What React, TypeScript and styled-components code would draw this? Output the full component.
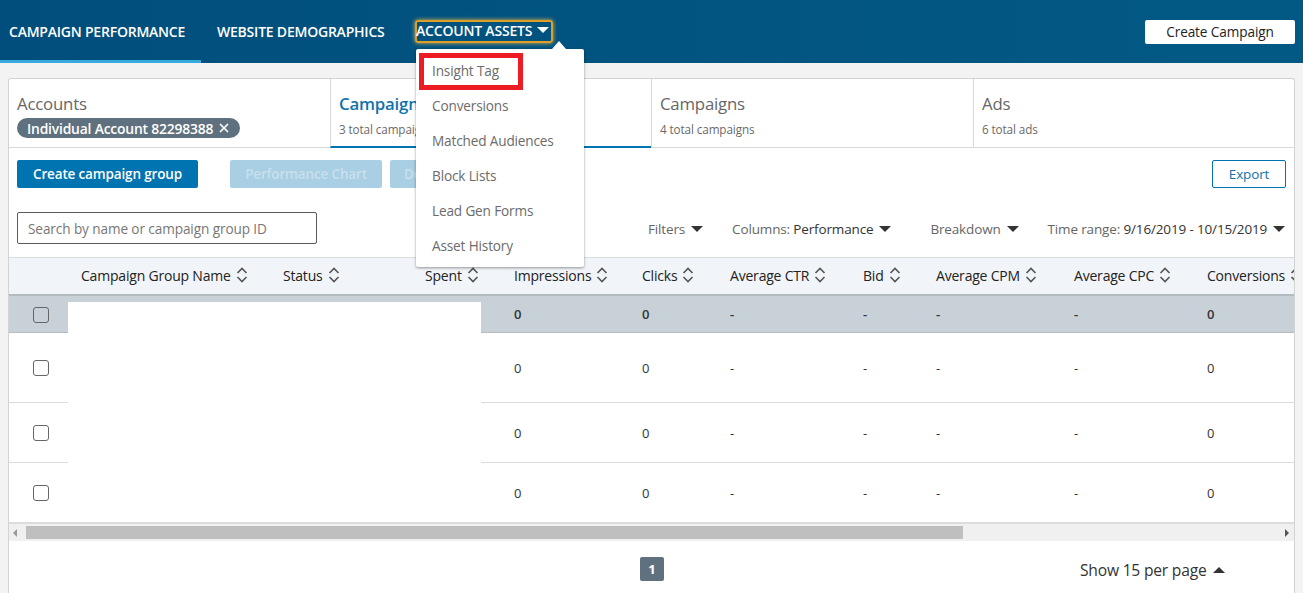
import React from "react"
import styled, { createGlobalStyle } from "styled-components"
import { X } from "lucide-react"

const GlobalStyle = createGlobalStyle`
  html, body {
    margin: 0;
    height: 100%;
    overflow: hidden;
    background: #f3f3f3;
    font-family: "Open Sans", "Noto Sans", sans-serif;
    color: #333;
  }
  * { box-sizing: border-box; }
`

const Page = styled.div`
  width: 1303px;
  height: 593px;
  overflow: hidden;
  display: flex;
  flex-direction: column;
`

const Header = styled.header`
  height: 63px;
  flex: none;
  background: linear-gradient(90deg, #014e7c, #025a84);
  display: flex;
  align-items: stretch;
  padding-right: 8px;
`

const NavItem = styled.div<{ $active?: boolean; $width: number; $inset: number }>`
  width: ${p => p.$width}px;
  flex: none;
  padding: 23px 0 0 ${p => p.$inset}px;
  font-size: 14px;
  line-height: 18px;
  font-weight: 600;
  letter-spacing: -0.22px;
  color: #fff;
  white-space: nowrap;
  border-bottom: 3px solid ${p => (p.$active ? "#38a9dd" : "transparent")};
`

const AssetsWrap = styled.div`
  position: relative;
  margin-left: -1px;
  margin-top: 20px;
  height: 23px;
`

const AssetsToggle = styled.div`
  width: 138px;
  height: 23px;
  display: flex;
  align-items: center;
  gap: 5px;
  padding: 0 0 3px 0;
  text-indent: -1px;
  border: 2px solid #dd9f27;
  border-radius: 3px;
  box-shadow: 0 0 4px #e9b44c;
  font-size: 14px;
  font-weight: 600;
  letter-spacing: -0.2px;
  color: #fff;
  white-space: nowrap;
`

const Caret = styled.span<{ $color?: string; $up?: boolean }>`
  display: inline-block;
  flex: none;
  width: 0;
  height: 0;
  border-left: 6px solid transparent;
  border-right: 6px solid transparent;
  ${p => (p.$up ? "border-bottom" : "border-top")}: 6px solid ${p => p.$color ?? "#333"};
`

const Menu = styled.div`
  position: absolute;
  top: 29px;
  left: 1px;
  width: 168px;
  height: 218px;
  padding-top: 4px;
  background: #fff;
  border-radius: 2px;
  box-shadow: 0 1px 3px rgba(0, 0, 0, 0.4);
  z-index: 5;
  &::before {
    content: "";
    position: absolute;
    top: -8px;
    right: 18px;
    border-left: 7px solid transparent;
    border-right: 7px solid transparent;
    border-bottom: 8px solid #fff;
  }
`

const MenuItem = styled.div`
  height: 35px;
  padding-left: 16px;
  display: flex;
  align-items: center;
  font-size: 13.6px;
  font-weight: 500;
  letter-spacing: -0.15px;
  color: #6b6b6b;
`

const Highlight = styled.div`
  position: absolute;
  top: 4px;
  left: 3px;
  width: 104px;
  height: 37px;
  border: 5px solid #ed1c24;
`

const CreateButton = styled.div`
  margin: 20px 0 0 auto;
  width: 150px;
  height: 24px;
  padding-bottom: 2px;
  background: #fff;
  border-radius: 2px;
  display: flex;
  align-items: center;
  justify-content: center;
  font-size: 13.6px;
  font-weight: 500;
  letter-spacing: -0.1px;
  color: #222;
`

const Card = styled.main`
  margin: 15px 8px 0;
  flex: 1;
  background: #fff;
  border: 1px solid #d3d3d3;
  border-bottom: none;
  border-radius: 3px 3px 0 0;
  display: flex;
  flex-direction: column;
  min-height: 0;
`

const Tabs = styled.div`
  height: 69px;
  flex: none;
  display: grid;
  grid-template-columns: 321px 321px 322px 1fr;
  border-bottom: 1px solid #d9d9d9;
`

const TabCell = styled.div<{ $active?: boolean; $first?: boolean }>`
  height: 69px;
  padding: 14px 0 0 8px;
  border-left: ${p => (p.$first ? "none" : "1px solid #d9d9d9")};
  border-bottom: ${p => (p.$active ? "2px solid #0073b1" : "none")};
  white-space: nowrap;
  overflow: hidden;
`

const TabTitle = styled.div<{ $active?: boolean }>`
  font-size: 16.8px;
  line-height: 22px;
  letter-spacing: -0.2px;
  font-weight: ${p => (p.$active ? 600 : 400)};
  color: ${p => (p.$active ? "#0f73ad" : "#666")};
`

const TabSub = styled.div`
  margin-top: 6px;
  font-size: 11.7px;
  line-height: 16px;
  letter-spacing: -0.1px;
  color: #6a6a6a;
`

const Pill = styled.div`
  margin-top: 3px;
  height: 20px;
  width: 223px;
  border-radius: 10px;
  background: #5f717f;
  color: #fff;
  display: flex;
  align-items: center;
  gap: 4px;
  padding-left: 10px;
  font-size: 13.9px;
  font-weight: 600;
  letter-spacing: -0.2px;
  white-space: nowrap;
`

const Toolbar = styled.div`
  flex: none;
  height: 64px;
  padding: 12px 8px 0 8px;
  display: flex;
  align-items: flex-start;
`

const Button = styled.div<{ $kind: "primary" | "disabled" | "outline"; $width: number; $gap?: number }>`
  width: ${p => p.$width}px;
  height: 28px;
  padding-bottom: 1px;
  margin-left: ${p => p.$gap ?? 0}px;
  border-radius: 2px;
  display: flex;
  align-items: center;
  justify-content: center;
  overflow: hidden;
  white-space: nowrap;
  font-size: 13.5px;
  font-weight: ${p => (p.$kind === "outline" ? 500 : 600)};
  letter-spacing: -0.15px;
  color: ${p => (p.$kind === "outline" ? "#0f73ad" : p.$kind === "disabled" ? "#c9dfec" : "#fff")};
  background: ${p => (p.$kind === "primary" ? "#0073b1" : p.$kind === "disabled" ? "#a8cfe4" : "#fff")};
  border: ${p => (p.$kind === "outline" ? "1px solid #0073b1" : "none")};
`

const ToolbarSpacer = styled.div`
  flex: 1;
`

const FilterRow = styled.div`
  flex: none;
  height: 45px;
  display: flex;
  align-items: flex-start;
`

const SearchBox = styled.div`
  margin-left: 8px;
  width: 300px;
  height: 32px;
  padding: 1px 0 0 10px;
  display: flex;
  align-items: center;
  border: 1px solid #5a5a5a;
  border-radius: 2px;
  font-size: 13.6px;
  letter-spacing: -0.1px;
  color: #777;
`

const FilterItem = styled.div<{ $left: number }>`
  margin-left: ${p => p.$left}px;
  height: 34px;
  display: flex;
  align-items: center;
  gap: 6px;
  font-size: 13.5px;
  letter-spacing: -0.15px;
  color: #666;
  white-space: nowrap;
  b {
    font-weight: 400;
    color: #333;
  }
`

const TableArea = styled.div`
  position: relative;
  flex: none;
  overflow: hidden;
`

const columns = "72px 202px 142px 89px 128px 88px 133px 73px 138px 133px 200px"

const HeadRow = styled.div`
  display: grid;
  grid-template-columns: ${columns};
  height: 39px;
  padding-bottom: 2px;
  background: #f1f4f8;
  border-top: 1px solid #d9dde0;
  border-bottom: 2px solid #b4bcc2;
`

const HeadCell = styled.div`
  display: flex;
  align-items: center;
  gap: 5px;
  font-size: 14px;
  font-weight: 400;
  letter-spacing: -0.2px;
  color: #222;
  white-space: nowrap;
`

const Row = styled.div<{ $height: number; $total?: boolean }>`
  display: grid;
  grid-template-columns: ${columns};
  align-items: center;
  height: ${p => p.$height}px;
  padding-top: 1px;
  background: ${p => (p.$total ? "#c7d1d7" : "#fff")};
  border-bottom: 1px solid ${p => (p.$total ? "#b4bcc2" : "#dcdcdc")};
  font-size: 13px;
  font-weight: ${p => (p.$total ? 600 : 400)};
  color: #333;
`

const Check = styled.div`
  margin-left: 24px;
  width: 16px;
  height: 16px;
  border: 1px solid #666;
  border-radius: 3px;
`

const Cell = styled.div<{ $raised?: boolean }>`
  white-space: nowrap;
  margin-top: ${p => (p.$raised ? "-2px" : "0")};
`

const Redaction = styled.div`
  position: absolute;
  top: 45px;
  left: 59px;
  width: 413px;
  height: 219px;
  background: #fff;
`

const Scrollbar = styled.div`
  flex: none;
  height: 18px;
  background: #f0f0f0;
  border-top: 1px solid #dcdcdc;
  display: flex;
  align-items: center;
  padding: 2px 0 2px 4px;
`

const ScrollThumb = styled.div`
  margin-left: 9px;
  width: 937px;
  height: 13px;
  background: #bfbfbf;
`

const ScrollArrow = styled.span<{ $right?: boolean }>`
  flex: none;
  width: 0;
  height: 0;
  border-top: 4px solid transparent;
  border-bottom: 4px solid transparent;
  ${p => (p.$right ? "border-left: 4px solid #555; margin-left: auto; margin-right: 5px;" : "border-right: 4px solid #999;")}
`

const Footer = styled.div`
  flex: 1;
  display: flex;
  align-items: flex-start;
  padding-top: 16px;
`

const PageNum = styled.div`
  margin-left: 631px;
  width: 24px;
  height: 24px;
  background: #5f717f;
  border-radius: 2px;
  color: #fff;
  font-size: 13px;
  font-weight: 700;
  display: flex;
  align-items: center;
  justify-content: center;
`

const PerPage = styled.div`
  margin-left: 416px;
  height: 25px;
  display: flex;
  align-items: center;
  gap: 7px;
  font-size: 15.6px;
  letter-spacing: -0.2px;
  color: #333;
  white-space: nowrap;
`

const menuItems = ["Insight Tag", "Conversions", "Matched Audiences", "Block Lists", "Lead Gen Forms", "Asset History"]

const headers = ["Campaign Group Name", "Status", "Spent", "Impressions", "Clicks", "Average CTR", "Bid", "Average CPM", "Average CPC", "Conversions"]

const SortIcon = () => (
  <svg width="12" height="16" viewBox="0 0 12 16" fill="none" stroke="#555" strokeWidth="1.6">
    <path d="M1.5 6L6 1.5 10.5 6" />
    <path d="M1.5 10L6 14.5 10.5 10" />
  </svg>
)

const DataRow = ({ height, total }: { height: number; total?: boolean }) => (
  <Row $height={height} $total={total}>
    <Check />
    <Cell />
    <Cell />
    <Cell />
    {["0", "0", "-", "-", "-", "-", "0"].map((value, i) => (
      <Cell key={i} $raised={total}>{value}</Cell>
    ))}
  </Row>
)

export default function App() {
  return (
    <Page>
      <GlobalStyle />
      <Header>
        <NavItem $active $width={201} $inset={9}>CAMPAIGN PERFORMANCE</NavItem>
        <NavItem $width={215} $inset={16}>WEBSITE DEMOGRAPHICS</NavItem>
        <AssetsWrap>
          <AssetsToggle>
            ACCOUNT ASSETS <Caret $color="#fff" />
          </AssetsToggle>
          <Menu>
            {menuItems.map(item => (
              <MenuItem key={item}>{item}</MenuItem>
            ))}
            <Highlight />
          </Menu>
        </AssetsWrap>
        <CreateButton>Create Campaign</CreateButton>
      </Header>
      <Card>
        <Tabs>
          <TabCell $first>
            <TabTitle>Accounts</TabTitle>
            <Pill>
              Individual Account 82298388 <X size={14} strokeWidth={3} />
            </Pill>
          </TabCell>
          <TabCell $active>
            <TabTitle $active>Campaign Groups</TabTitle>
            <TabSub>3 total campaign groups</TabSub>
          </TabCell>
          <TabCell>
            <TabTitle>Campaigns</TabTitle>
            <TabSub>4 total campaigns</TabSub>
          </TabCell>
          <TabCell>
            <TabTitle>Ads</TabTitle>
            <TabSub>6 total ads</TabSub>
          </TabCell>
        </Tabs>
        <Toolbar>
          <Button $kind="primary" $width={181}>Create campaign group</Button>
          <Button $kind="disabled" $width={152} $gap={32}>Performance Chart</Button>
          <Button $kind="disabled" $width={120} $gap={8}>Demographics</Button>
          <ToolbarSpacer />
          <Button $kind="outline" $width={74}>Export</Button>
        </Toolbar>
        <FilterRow>
          <SearchBox>Search by name or campaign group ID</SearchBox>
          <FilterItem $left={331}>Filters <Caret /></FilterItem>
          <FilterItem $left={29}><span>Columns: <b>Performance</b></span> <Caret /></FilterItem>
          <FilterItem $left={39}>Breakdown <Caret /></FilterItem>
          <FilterItem $left={29}><span>Time range: <b>9/16/2019 - 10/15/2019</b></span> <Caret /></FilterItem>
        </FilterRow>
        <TableArea>
          <HeadRow>
            <Cell />
            {headers.map(h => (
              <HeadCell key={h}>
                {h} <SortIcon />
              </HeadCell>
            ))}
          </HeadRow>
          <DataRow height={37} total />
          <DataRow height={70} />
          <DataRow height={60} />
          <DataRow height={60} />
          <Redaction />
        </TableArea>
        <Scrollbar>
          <ScrollArrow />
          <ScrollThumb />
          <ScrollArrow $right />
        </Scrollbar>
        <Footer>
          <PageNum>1</PageNum>
          <PerPage>Show 15 per page <Caret $up /></PerPage>
        </Footer>
      </Card>
    </Page>
  )
}
